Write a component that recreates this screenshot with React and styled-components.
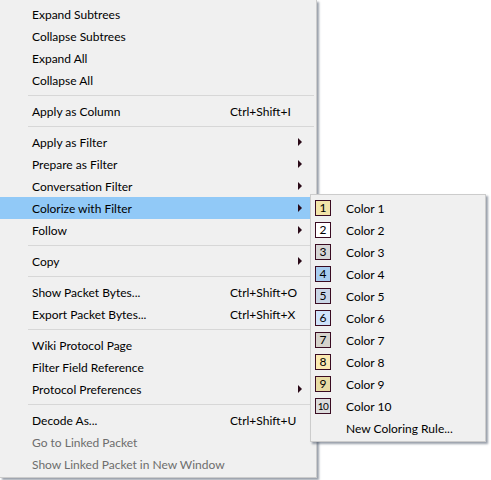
import React from 'react';
import styled, { createGlobalStyle } from 'styled-components';

const Global = createGlobalStyle`
  html, body {
    margin: 0;
    padding: 0;
    background: #ffffff;
  }
  body {
    font-family: Lato, "Noto Sans", sans-serif;
    font-size: 12px;
    color: #000;
  }
`;

const Page = styled.div`
  position: relative;
  width: 491px;
  height: 480px;
  overflow: hidden;
`;

const Menu = styled.div`
  width: 316px;
  padding: 3px 0 0;
  height: 474px;
  background: #f0f0f0;
  border-right: 1px solid #cccccc;
  border-bottom: 1px solid #cccccc;
  box-shadow: 2px 2px 2px rgba(70, 80, 100, 0.55);
`;

const Row = styled.div`
  display: flex;
  align-items: center;
  height: 22px;
  padding: 0 14px 0 32px;
  background: ${({ active }) => (active ? '#91c9f7' : 'transparent')};
  color: ${({ disabled }) => (disabled ? '#6d6d6d' : '#000')};
  white-space: nowrap;
`;

const Label = styled.span`
  width: 198px;
  flex: none;
`;

const Shortcut = styled.span`
  flex: 1;
`;

const Arrow = styled.span`
  margin-left: auto;
  width: 0;
  height: 0;
  border-top: 4px solid transparent;
  border-bottom: 4px solid transparent;
  border-left: 4px solid #2a0a18;
`;

const Separator = styled.div`
  height: 9px;
  display: flex;
  align-items: center;
  padding-left: 28px;
  padding-right: 2px;

  &::after {
    content: '';
    flex: 1;
    height: 1px;
    background: #d7d7d7;
  }
`;

const SubMenu = styled.div`
  position: absolute;
  left: 310px;
  top: 194px;
  width: 174px;
  height: 244px;
  padding-top: 2px;
  background: #f0f0f0;
  border: 1px solid #cccccc;
  box-shadow: 2px 2px 2px rgba(70, 80, 100, 0.55);
`;

const SubRow = styled.div`
  display: flex;
  align-items: center;
  height: 22px;
  padding-left: 4px;
  white-space: nowrap;
`;

const Swatch = styled.span`
  box-sizing: border-box;
  width: 16px;
  height: 16px;
  border: 1px solid #3a0c22;
  background: ${({ color }) => color};
  display: flex;
  align-items: center;
  justify-content: center;
  font-size: ${({ small }) => (small ? '10px' : '12px')};
  letter-spacing: ${({ small }) => (small ? '-0.5px' : '0')};
  line-height: 1;
  flex: none;
`;

const SubLabel = styled.span`
  margin-left: ${({ indent }) => (indent ? '31px' : '15px')};
`;

const items = [
  { label: 'Expand Subtrees' },
  { label: 'Collapse Subtrees' },
  { label: 'Expand All' },
  { label: 'Collapse All' },
  'sep',
  { label: 'Apply as Column', shortcut: 'Ctrl+Shift+I' },
  'sep',
  { label: 'Apply as Filter', sub: true },
  { label: 'Prepare as Filter', sub: true },
  { label: 'Conversation Filter', sub: true },
  { label: 'Colorize with Filter', sub: true, active: true },
  { label: 'Follow', sub: true },
  'sep',
  { label: 'Copy', sub: true },
  'sep',
  { label: 'Show Packet Bytes...', shortcut: 'Ctrl+Shift+O' },
  { label: 'Export Packet Bytes...', shortcut: 'Ctrl+Shift+X' },
  'sep',
  { label: 'Wiki Protocol Page' },
  { label: 'Filter Field Reference' },
  { label: 'Protocol Preferences', sub: true },
  'sep',
  { label: 'Decode As...', shortcut: 'Ctrl+Shift+U' },
  { label: 'Go to Linked Packet', disabled: true },
  { label: 'Show Linked Packet in New Window', disabled: true },
];

const colors = [
  '#f3e4a8',
  '#ffffff',
  '#d6d6d6',
  '#a8cdf0',
  '#c9d6e6',
  '#cfe3fb',
  '#d6d3cc',
  '#fbeab2',
  '#e8dca4',
  '#dcdcdc',
];

export default function App() {
  return (
    <Page>
      <Global />
      <Menu>
        {items.map((item, i) =>
          item === 'sep' ? (
            <Separator key={i} />
          ) : (
            <Row key={i} active={item.active} disabled={item.disabled}>
              <Label>{item.label}</Label>
              {item.shortcut && <Shortcut>{item.shortcut}</Shortcut>}
              {item.sub && <Arrow />}
            </Row>
          )
        )}
      </Menu>
      <SubMenu>
        {colors.map((c, i) => (
          <SubRow key={i}>
            <Swatch color={c} small={i === 9}>{i + 1}</Swatch>
            <SubLabel>Color {i + 1}</SubLabel>
          </SubRow>
        ))}
        <SubRow>
          <SubLabel indent>New Coloring Rule...</SubLabel>
        </SubRow>
      </SubMenu>
    </Page>
  );
}
